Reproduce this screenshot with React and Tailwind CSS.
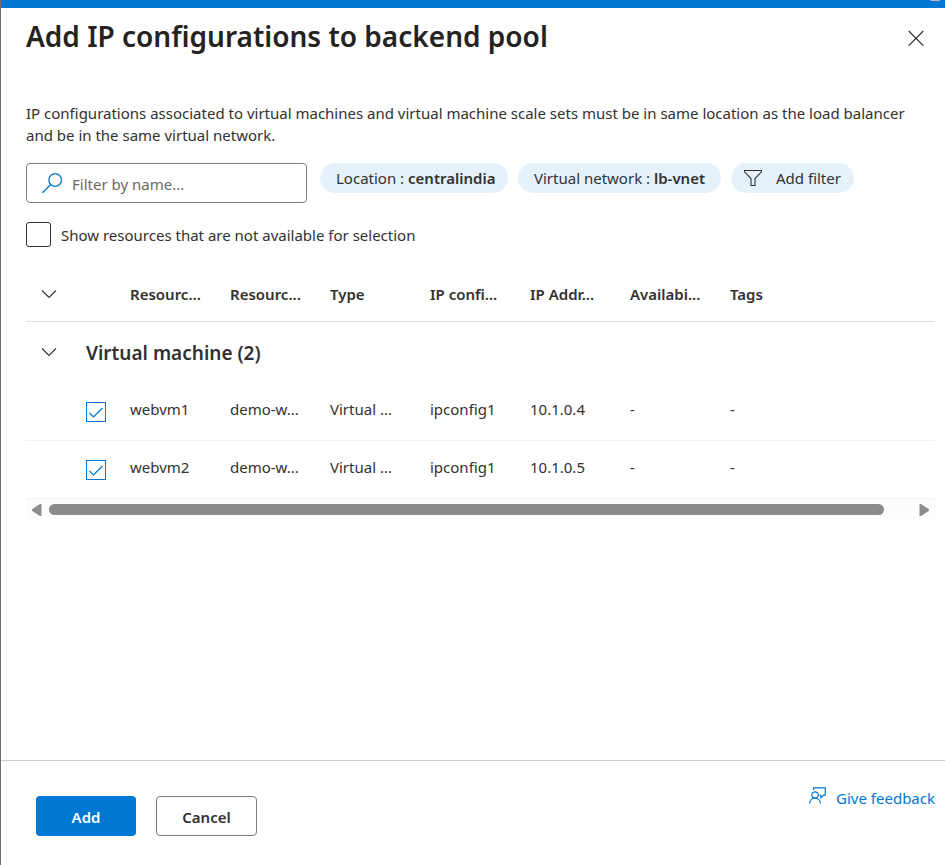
const columns = ["Resourc...", "Resourc...", "Type", "IP confi...", "IP Addr...", "Availabi...", "Tags"];

const rows = [
  ["webvm1", "demo-w...", "Virtual ...", "ipconfig1", "10.1.0.4", "-", "-"],
  ["webvm2", "demo-w...", "Virtual ...", "ipconfig1", "10.1.0.5", "-", "-"],
];

function Chevron() {
  return (
    <svg width="16" height="10" viewBox="0 0 16 10" fill="none" stroke="#323130" strokeWidth="1.1" aria-hidden="true">
      <path d="M1 1.500 8 8.500 15 1.500" />
    </svg>
  );
}

function SearchIcon() {
  return (
    <svg width="22" height="22" viewBox="0 0 22 22" fill="none" stroke="#0078d4" strokeWidth="1.3" className="shrink-0" aria-hidden="true">
      <circle cx="13.200" cy="8" r="6.300" />
      <path d="M8.700 12.500 .4 20.800" />
    </svg>
  );
}

function FunnelIcon() {
  return (
    <svg width="18" height="16" viewBox="0 0 18 16" fill="none" stroke="#323130" strokeWidth="1.1" aria-hidden="true">
      <path d="M.5.5h17v1.300L11 8.500v7H7v-7L.5 1.800Z" />
    </svg>
  );
}

function FeedbackIcon() {
  return (
    <svg width="17" height="17" viewBox="0 0 17 17" fill="none" stroke="#0078d4" strokeWidth="1.2" aria-hidden="true">
      <circle cx="6" cy="8" r="3.200" />
      <path d="M.7 16.500c0-3.200 2.300-5.300 5.300-5.300s5.300 2.100 5.300 5.300" />
      <path d="M4.600 3V.8h11.700v7.400h-1.800l-2.600 2.600V8.200h-1.400" />
    </svg>
  );
}

function RowCheckbox({ label }) {
  return (
    <span className="grid h-5 w-5">
      <input
        type="checkbox"
        defaultChecked
        aria-label={label}
        className="peer col-start-1 row-start-1 h-5 w-5 appearance-none border border-[#0078d4] bg-white"
      />
      <svg
        viewBox="0 0 20 20"
        fill="none"
        stroke="#0078d4"
        strokeWidth="1.200"
        className="pointer-events-none invisible col-start-1 row-start-1 h-5 w-5 peer-checked:visible"
        aria-hidden="true"
      >
        <path d="M3.500 11 7.500 15 16.500 6" />
      </svg>
    </span>
  );
}

export default function App() {
  return (
    <div className="flex min-h-screen flex-col border-l border-[#6e6e6e] bg-white font-['Noto_Sans','Open_Sans',sans-serif] text-[15px] leading-[22px] text-[#323130]">
      <div className="flex h-2 items-start justify-end bg-[#0078d4] pr-[5px]">
        <div className="h-px w-[10px] rounded-b-full bg-[#b8b8b8]" />
      </div>

      <header className="flex items-start justify-between pt-2 pr-[19px] pl-[25px]">
        <h1 className="text-[28px] leading-[40px] font-semibold text-[#242322]">Add IP configurations to backend pool</h1>
        <button type="button" aria-label="Close" className="mt-3 p-[2px]">
          <svg width="16" height="16" viewBox="0 0 16 16" fill="none" stroke="#323130" strokeWidth="1.200" aria-hidden="true">
            <path d="m.7 1 14.600 14.600M15.300 1 .7 15.600" />
          </svg>
        </button>
      </header>

      <main className="pr-[10px] pl-[25px]">
        <p className="mt-[46px] pr-2">
          IP configurations associated to virtual machines and virtual machine scale sets must be in same location as the load balancer and
          be in the same virtual network.
        </p>

        <div className="mt-[17px] flex items-start">
          <label className="flex h-10 w-[281px] items-center gap-2 rounded-sm border border-[#7f7e7d] px-[15px]">
            <SearchIcon />
            <input
              type="text"
              aria-label="Filter by name"
              placeholder="Filter by name..."
              className="w-full min-w-0 pt-[2px] outline-none placeholder:text-[#6a6967]"
            />
          </label>
          <div className="ml-[13px] flex flex-wrap gap-[10px]">
            <button type="button" className="h-[30px] w-[188px] rounded-full bg-[#e5f1fb] pl-4 text-left whitespace-nowrap">
              Location : <span className="font-semibold">centralindia</span>
            </button>
            <button type="button" className="h-[30px] w-[203px] rounded-full bg-[#e5f1fb] pl-4 text-left whitespace-nowrap">
              Virtual network : <span className="font-semibold">lb-vnet</span>
            </button>
            <button type="button" className="flex h-[30px] w-[123px] items-center gap-[14px] rounded-full bg-[#e5f1fb] pl-[13px] whitespace-nowrap">
              <FunnelIcon />
              Add filter
            </button>
          </div>
        </div>

        <label className="mt-[19px] flex items-center gap-[10px]">
          <input type="checkbox" className="h-[25px] w-[25px] appearance-none rounded-[3px] border border-[#323130] checked:bg-[#0078d4]" />
          Show resources that are not available for selection
        </label>

        <table className="mt-5 w-full table-fixed text-left">
          <colgroup>
            <col className="w-[60px]" />
            <col className="w-[44px]" />
            <col className="w-[100px]" />
            <col className="w-[100px]" />
            <col className="w-[100px]" />
            <col className="w-[100px]" />
            <col className="w-[100px]" />
            <col className="w-[100px]" />
            <col />
          </colgroup>
          <thead>
            <tr className="h-[54px] border-b border-[#e1dfdd]">
              <th className="pl-[15px]">
                <button type="button" aria-label="Collapse all groups" className="block">
                  <Chevron />
                </button>
              </th>
              <th />
              {columns.map((name, i) => (
                <th key={i} scope="col" className="font-semibold whitespace-nowrap">
                  {name}
                </th>
              ))}
            </tr>
          </thead>
          <tbody>
            <tr className="h-[61px]">
              <td className="pl-[15px]">
                <button type="button" aria-label="Collapse virtual machines" className="block">
                  <Chevron />
                </button>
              </td>
              <th colSpan={8} scope="rowgroup" className="pt-[2px] text-[19px] font-semibold">
                Virtual machine (2)
              </th>
            </tr>
            {rows.map((cells) => (
              <tr key={cells[0]} className="h-[58px] border-b border-[#f3f2f1]">
                <td />
                <td className="pt-[2px]">
                  <RowCheckbox label={"Select " + cells[0]} />
                </td>
                {cells.map((cell, i) => (
                  <td key={i} className="pb-1 whitespace-nowrap">
                    {cell}
                  </td>
                ))}
              </tr>
            ))}
          </tbody>
        </table>

        <div className="flex h-5 items-center gap-[7px] bg-[#fcfcfc] px-[6px] pt-[2px]">
          <svg width="10" height="12" viewBox="0 0 10 12" fill="#8b8b8b" aria-hidden="true">
            <path d="M9.500 0v12H8L0 6.800V5.200L8 0Z" />
          </svg>
          <div className="flex-1 pr-[28px]">
            <div className="h-[11px] rounded-full bg-[#8b8b8b]" />
          </div>
          <svg width="10" height="12" viewBox="0 0 10 12" fill="#8b8b8b" aria-hidden="true">
            <path d="M.5 0v12H2l8-5.200V5.200L2 0Z" />
          </svg>
        </div>
      </main>

      <footer className="mt-auto flex items-start justify-between border-t border-[#cccccc] pt-[35px] pr-[10px] pb-[29px] pl-[35px]">
        <div className="flex gap-5">
          <button type="button" className="h-10 w-[100px] rounded-sm bg-[#0078d4] pt-[2px] font-semibold text-white">
            Add
          </button>
          <button type="button" className="h-10 w-[101px] rounded-sm border border-[#7f7e7d] pt-[2px] font-semibold">
            Cancel
          </button>
        </div>
        <a href="#feedback" className="-mt-[9px] flex items-start gap-[10px] text-[#0078d4]">
          <FeedbackIcon />
          Give feedback
        </a>
      </footer>
    </div>
  );
}
